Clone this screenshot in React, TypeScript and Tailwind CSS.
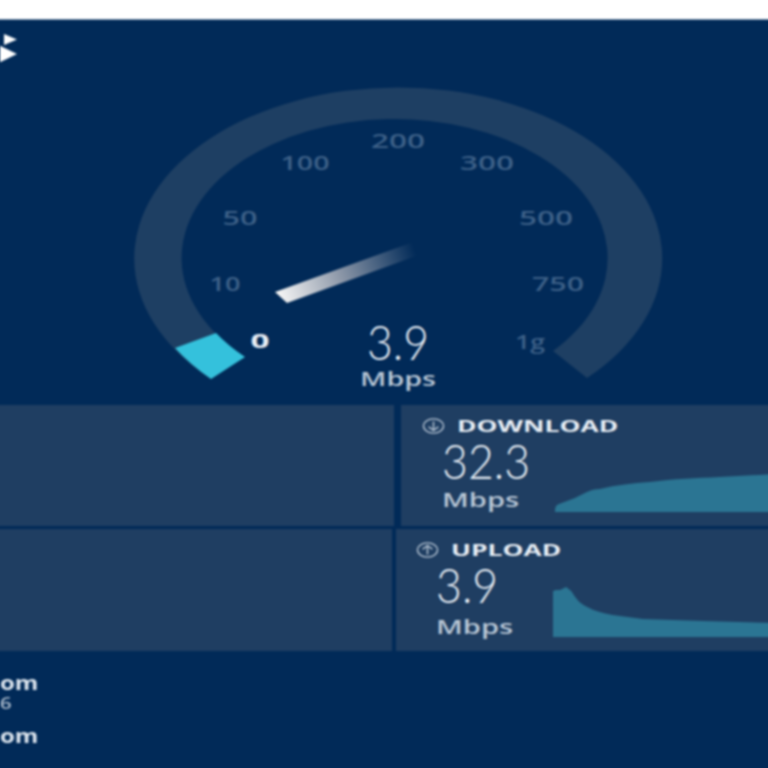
const sans = "font-['Open_Sans',sans-serif]";

function Gauge() {
  const labels = [
    { t: "200", x: 398, y: 148, w: 54 },
    { t: "100", x: 305, y: 170, w: 49 },
    { t: "300", x: 487, y: 170, w: 54 },
    { t: "50", x: 240, y: 225, w: 35 },
    { t: "500", x: 546, y: 225, w: 54 },
    { t: "10", x: 225, y: 291, w: 31 },
    { t: "750", x: 558, y: 291, w: 52 },
    { t: "1g", x: 530, y: 349, w: 30 },
  ];
  return (
    <svg viewBox="0 20 768 384" className="block ml-2 w-[768px] h-[384px]">
      <defs>
        <linearGradient id="needle" gradientUnits="userSpaceOnUse" x1="280" y1="297" x2="415" y2="250">
          <stop offset="0" stopColor="#f4f4f4" />
          <stop offset="0.45" stopColor="#8c97a8" />
          <stop offset="1" stopColor="#012a58" />
        </linearGradient>
      </defs>
      <path d="M211 379A264 171 0 1 1 587 378L553 351A213 139 0 1 0 245 357Z" fill="#1e3f63" />
      <path d="M175 348A264 171 0 0 0 211 379L245 357A213 139 0 0 1 216 333Z" fill="#34c1dc" />
      <path d="M275 292L287 303L416 256L416 241Z" fill="url(#needle)" />
      {labels.map((l) => (
        <text
          key={l.t}
          x={l.x}
          y={l.y}
          textAnchor="middle"
          textLength={l.w}
          lengthAdjust="spacingAndGlyphs"
          fontFamily="'Open Sans', sans-serif"
          fontWeight="600"
          fontSize="19"
          fill="#3d6087"
        >
          {l.t}
        </text>
      ))}
      <text x="260" y="348" textAnchor="middle" textLength="19" lengthAdjust="spacingAndGlyphs" fontFamily="'Open Sans', sans-serif" fontWeight="700" fontSize="19" fill="#e8eef5">
        0
      </text>
      <text x="398" y="360" textAnchor="middle" textLength="62" lengthAdjust="spacingAndGlyphs" fontFamily="Lato, sans-serif" fontWeight="300" fontSize="47" fill="#e8eef5">
        3.9
      </text>
      <text x="398" y="386" textAnchor="middle" textLength="76" lengthAdjust="spacingAndGlyphs" fontFamily="'Open Sans', sans-serif" fontWeight="600" fontSize="19" fill="#b9c7d6">
        Mbps
      </text>
      <path d="M4 34L17 39.5L4 45ZM-8 42L17 54L-8 66Z" fill="#ffffff" />
    </svg>
  );
}

function ArrowCircle({ up }: { up?: boolean }) {
  return (
    <svg viewBox="0 0 24 18" preserveAspectRatio="none" className="w-[23px] h-4 shrink-0" fill="none" stroke="#b9c7d6" strokeWidth="1.5">
      <ellipse cx="12" cy="9" rx="10.5" ry="8" />
      {up ? <path d="M12 14V4M7 8L12 4L17 8" /> : <path d="M12 4V14M7 10L12 14L17 10" />}
    </svg>
  );
}

function Stat(props: { label: string; value: string; up?: boolean; path: string; chartH: number; className: string; headPad: string; colClass: string; valuePad: string }) {
  return (
    <div className={`flex min-w-0 flex-col bg-[#1f3e62] ${props.className}`}>
      <div className={`flex items-center gap-3 ${props.headPad} pt-3 h-[30px]`}>
        <ArrowCircle up={props.up} />
        <span className={`${sans} scale-x-[1.6] origin-left text-[16.5px] leading-none font-bold text-[#e8eef5]`}>{props.label}</span>
      </div>
      <div className="flex min-w-0 flex-1 items-end">
        <div className={`shrink-0 ${props.colClass}`}>
          <div className={`font-['Lato',sans-serif] scale-x-[0.93] origin-left text-[48px] leading-[48px] font-light text-[#e8eef5] ${props.valuePad}`}>{props.value}</div>
          <div className={`${sans} scale-x-[1.53] origin-left text-[19px] leading-6 font-semibold text-[#b9c7d6]`}>Mbps</div>
        </div>
        <svg viewBox={`0 0 222 ${props.chartH}`} preserveAspectRatio="none" className="min-w-0 flex-1 mb-[14px] block" height={props.chartH}>
          <path d={props.path} fill="#2b7593" />
        </svg>
      </div>
    </div>
  );
}

export default function App() {
  return (
    <div className="w-[768px] h-[768px] overflow-hidden bg-[#012a58]">
      {/* 8px bleed so the blur doesn't fade at the page edges */}
      <div className="w-[784px] h-[784px] -ml-2 -mt-2 bg-[#012a58] blur-[0.8px]">
        <div className="h-7 bg-white border-b border-[#6f89a6]" />
        <Gauge />
        <div className="flex gap-[7px] pt-px">
          <div className="w-[402px] shrink-0 h-[121px] bg-[#1f3e62]" />
          <Stat
            className="flex-1 h-[121px]"
            label="DOWNLOAD"
            value="32.3"
            headPad="pl-[21px]"
            colClass="w-[154px] pl-[41px] pb-[14px]"
            valuePad="-translate-y-[3px]"
            chartH={38}
            path="M0 38C0 33 1 31 4 30L20 24C28 20 36 15 45 15C62 11 78 9 95 8C120 5 142 4 165 3L222 0V38Z"
          />
        </div>
        <div className="flex gap-1 pt-[3px]">
          <div className="w-[400px] shrink-0 h-[122px] bg-[#1f3e62]" />
          <Stat
            className="flex-1 h-[122px]"
            label="UPLOAD"
            value="3.9"
            up
            headPad="pl-[20px]"
            colClass="w-[156px] pl-[40px] pb-[12px]"
            valuePad="-translate-y-[6px]"
            chartH={50}
            path="M1 50V4L4 3L8 3L14 0L19 4C24 12 28 17 35 20C42 24 50 26 60 28L90 32L150 34L222 36V50Z"
          />
        </div>
        <div className={`${sans} pl-2 pt-[22px] text-[#dbe4ed]`}>
          <div className="h-5 text-[20px] leading-5 font-bold scale-x-[1.2] origin-left">om</div>
          <div className="h-5 text-[17px] leading-5 font-semibold text-[#a9b9ca] scale-x-[1.2] origin-left">6</div>
          <div className="mt-[13px] h-5 text-[20px] leading-5 font-bold scale-x-[1.2] origin-left">om</div>
        </div>
      </div>
    </div>
  );
}
